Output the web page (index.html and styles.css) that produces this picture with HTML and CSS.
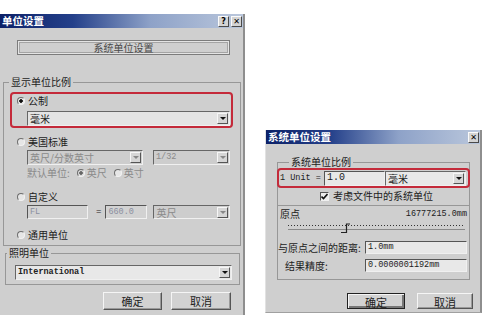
FILE: index.html
```html
<!DOCTYPE html>
<html lang="zh-CN">
<head>
<meta charset="UTF-8">
<title>单位设置</title>
<link rel="stylesheet" href="styles.css">
</head>
<body>

<div class="page">

  <div class="dialog dlg-units">
    <div class="titlebar">
      <span class="title">单位设置</span>
      <span class="tbtn">?</span>
      <span class="tbtn">✕</span>
    </div>

    <div class="sys-btn">系统单位设置</div>

    <fieldset class="group g-scale">
      <legend>显示单位比例</legend>
      <div class="hilite">
        <div class="opt"><span class="radio on"></span>公制</div>
        <div class="combo c-metric"><span class="val">毫米</span><span class="arrow"></span></div>
      </div>
      <div class="opt opt-us"><span class="radio"></span>美国标准</div>
      <div class="row row-us">
        <div class="combo off c-feet"><span class="val">英尺/分数英寸</span><span class="arrow"></span></div>
        <div class="combo off c-frac"><span class="val mono">1/32</span><span class="arrow"></span></div>
      </div>
      <div class="row row-default">
        <span class="dim">默认单位:</span>
        <span class="radio on small dimradio"></span><span class="dim">英尺</span>
        <span class="radio small"></span><span class="dim">英寸</span>
      </div>
      <div class="opt opt-custom"><span class="radio"></span>自定义</div>
      <div class="row row-custom">
        <div class="field off f-fl">FL</div>
        <span class="eq">=</span>
        <div class="field off f-num">660.0</div>
        <div class="combo off c-unit"><span class="val">英尺</span><span class="arrow"></span></div>
      </div>
      <div class="opt opt-generic"><span class="radio"></span>通用单位</div>
    </fieldset>

    <fieldset class="group g-light">
      <legend>照明单位</legend>
      <div class="combo c-intl"><span class="val mono">International</span><span class="arrow"></span></div>
    </fieldset>

    <div class="btn-row">
      <button class="btn b-ok">确定</button>
      <button class="btn b-cancel">取消</button>
    </div>
  </div>

  <div class="dialog dlg-system">
    <div class="titlebar">
      <span class="title">系统单位设置</span>
      <span class="tbtn">✕</span>
    </div>

    <fieldset class="group g-sys">
      <legend>系统单位比例</legend>
      <div class="hilite hilite-sys">
        <span class="mono unit-label">1 Unit =</span>
        <div class="field f-scale">1.0</div>
        <div class="combo c-mm"><span class="val">毫米</span><span class="arrow"></span></div>
      </div>
      <div class="check-row">
        <span class="checkbox">
          <svg width="7" height="7" viewBox="0 0 7 7"><polyline points="0.5,3.5 2.5,5.5 6.5,1" fill="none" stroke="#111" stroke-width="1.6"/></svg>
        </span>
        考虑文件中的系统单位
      </div>
    </fieldset>

    <div class="box-origin">
      <div class="origin-row">
        <span>原点</span>
        <span class="mono">16777215.0mm</span>
      </div>
      <div class="slider">
        <svg width="177" height="12" viewBox="0 0 177 12">
          <line x1="0" y1="2.5" x2="177" y2="2.5" stroke="#333" stroke-dasharray="1 2"/>
          <line x1="0" y1="6.5" x2="177" y2="6.5" stroke="#8a8a8a"/>
          <path d="M53 9.5 H58.5 V1 H62" fill="none" stroke="#222" stroke-width="1.2"/>
        </svg>
      </div>
      <div class="dist-row">
        <span class="lbl">与原点之间的距离:</span>
        <div class="field f-wide mono">1.0mm</div>
      </div>
      <div class="dist-row prec-row">
        <span class="lbl">结果精度:</span>
        <div class="field f-wide mono">0.0000001192mm</div>
      </div>
    </div>

    <div class="btn-row sys-btns">
      <button class="btn default b-ok2">确定</button>
      <button class="btn b-cancel2">取消</button>
    </div>
  </div>

</div>

</body>
</html>
```

FILE: styles.css
```css
* {
  box-sizing: border-box;
}
body {
  margin: 0;
  background: #fff;
  font-family: "Noto Sans CJK SC", "DejaVu Sans", sans-serif;
  font-size: 10px;
  color: #1c1c1c;
}
.page {
  display: flex;
  align-items: flex-start;
  width: 499px;
  height: 324px;
  overflow: hidden;
}
.mono {
  font-family: "Liberation Mono", "DejaVu Sans Mono", monospace;
  font-size: 8.5px;
}
.dim {
  color: #8a8a8a;
}

/* dialog frames */
.dialog {
  background: #cfcfcf;
}
.dlg-units {
  margin-top: 14px;
  width: 245px;
  height: 301px;
  border-right: 2px solid #8e8e8e;
}
.dlg-system {
  margin: 130px 0 0 20px;
  width: 217px;
  height: 183px;
  border-left: 1px solid #e2e2e2;
  border-right: 2px solid #8e8e8e;
  border-bottom: 1px solid #a0a0a0;
}
.titlebar {
  height: 14px;
  display: flex;
  align-items: center;
  gap: 2px;
  padding: 0 1px 0 2px;
  background: linear-gradient(90deg, #0c2168 0%, #24408a 30%, #8ea2c8 62%, #bac7dc 100%);
}
.title {
  flex: 1;
  color: #fff;
  font-weight: bold;
  font-size: 10.5px;
  line-height: 14px;
}
.tbtn {
  width: 11px;
  height: 11px;
  background: #d4d4d4;
  border: 1px solid;
  border-color: #fafafa #4a4a4a #4a4a4a #fafafa;
  font: bold 8px/9px "DejaVu Sans", sans-serif;
  text-align: center;
  color: #000;
}

/* left dialog */
.sys-btn {
  margin: 12px 0 0 17px;
  width: 213px;
  height: 15px;
  border: 1px solid #7c7c7c;
  box-shadow: inset 0 0 0 1px #e4e4e4, inset 0 0 0 2px #a4a4a4;
  text-align: center;
  line-height: 13px;
  color: #4a4a4a;
}
.group {
  margin: 0;
  padding: 0;
  min-width: 0;
  border: 1px solid #979797;
}
.group legend {
  padding: 0 2px;
  line-height: 14px;
}
.g-scale {
  margin: 20px 0 0 3px;
  width: 238px;
  height: 171px;
}
.g-scale legend {
  margin-left: 5px;
}
.hilite {
  margin: 3px 0 0 6px;
  width: 223px;
  height: 36px;
  padding-left: 5px;
  border: 2px solid #c42a3a;
  border-radius: 4px;
}
.opt {
  display: flex;
  align-items: center;
  height: 14px;
  line-height: 14px;
}
.radio {
  flex: none;
  width: 8px;
  height: 8px;
  margin-right: 3px;
  border: 1px solid;
  border-color: #6e6e6e #f2f2f2 #f2f2f2 #6e6e6e;
  border-radius: 50%;
  background: #e6e6e6;
}
.radio.on {
  background: radial-gradient(circle, #111 0 1.5px, #e6e6e6 2px);
}
.radio.dimradio {
  background: radial-gradient(circle, #666 0 1.5px, #d8d8d8 2px);
}
.radio.small {
  margin: 0 2px 0 7px;
}
.combo {
  display: flex;
  align-items: center;
  height: 15px;
  padding: 0 1px 0 2px;
  border: 1px solid;
  border-color: #666 #f0f0f0 #f0f0f0 #666;
  background: #e4e4e4;
}
.combo .val {
  flex: 1;
  line-height: 13px;
  white-space: nowrap;
}
.combo.off {
  background: #cdcdcd;
  color: #8a8a8a;
}
.arrow {
  flex: none;
  width: 11px;
  height: 11px;
  position: relative;
  background: #d6d6d6;
  border: 1px solid;
  border-color: #f6f6f6 #555 #555 #f6f6f6;
}
.arrow::after {
  content: "";
  position: absolute;
  left: 2px;
  top: 3px;
  border-left: 3px solid transparent;
  border-right: 3px solid transparent;
  border-top: 3px solid #111;
}
.combo.off .arrow::after {
  border-top-color: #888;
}
.c-metric {
  margin: 3px 0 0 10px;
  width: 203px;
}
.opt-us {
  margin: 7px 0 0 13px;
}
.row {
  display: flex;
  align-items: center;
  margin-left: 23px;
}
.row-us {
  margin-top: 1px;
  gap: 10px;
}
.c-feet {
  width: 116px;
}
.c-frac {
  width: 77px;
}
.row-default {
  margin-top: 1px;
  height: 14px;
  line-height: 14px;
}
.opt-custom {
  margin: 10px 0 0 13px;
}
.row-custom {
  margin-top: 1px;
  height: 14px;
}
.field {
  height: 14px;
  padding-left: 2px;
  border: 1px solid;
  border-color: #555 #f0f0f0 #f0f0f0 #555;
  background: #e6e6e6;
  font-family: "Liberation Mono", "DejaVu Sans Mono", monospace;
  font-size: 8.5px;
  line-height: 12px;
  white-space: nowrap;
}
.field.off {
  background: #d2d2d2;
  color: #8a8fa0;
}
.f-fl {
  width: 61px;
}
.eq {
  margin: 0 4px 0 8px;
  font-family: "Liberation Mono", monospace;
  font-size: 9px;
}
.f-num {
  width: 42px;
}
.c-unit {
  margin-left: 6px;
  width: 77px;
  height: 14px;
}
.opt-generic {
  margin: 9px 0 0 13px;
}
.g-light {
  margin: 0 0 0 5px;
  width: 235px;
  height: 39px;
}
.g-light legend {
  margin-left: 1px;
}
.c-intl {
  margin: 5px 0 0 9px;
  width: 217px;
  background: #e8e8e8;
}
.c-intl .val {
  font-weight: bold;
  color: #222;
}
.btn-row {
  display: flex;
  gap: 9px;
  margin: 7px 0 0 103px;
}
.btn {
  height: 18px;
  padding: 0;
  border: 1px solid;
  border-color: #f5f5f5 #555 #555 #f5f5f5;
  box-shadow: inset -1px -1px 0 #9a9a9a;
  background: #d2d2d2;
  font-family: "Noto Sans CJK SC", sans-serif;
  font-size: 11px;
  color: #222;
}
.b-ok {
  width: 59px;
}
.b-cancel {
  width: 60px;
}

/* right dialog */
.g-sys {
  margin: 12px 0 0 11px;
  width: 193px;
  height: 50px;
}
.g-sys legend {
  margin-left: 11px;
  line-height: 12px;
}
.hilite-sys {
  display: flex;
  align-items: center;
  margin: 0 -1px;
  width: auto;
  height: 20px;
  padding-left: 1px;
}
.unit-label {
  width: 44px;
  white-space: pre;
}
.f-scale {
  width: 61px;
  height: 15px;
  font-size: 10px;
  background: #e8e8e8;
}
.c-mm {
  width: 81px;
  background: #e8e8e8;
}
.check-row {
  display: flex;
  align-items: center;
  margin-top: 1px;
  padding-left: 42px;
  height: 14px;
  line-height: 14px;
}
.checkbox {
  display: flex;
  align-items: center;
  justify-content: center;
  width: 9px;
  height: 9px;
  margin-right: 4px;
  border: 1px solid;
  border-color: #555 #f0f0f0 #f0f0f0 #555;
  background: #ececec;
}
.box-origin {
  margin: -1px 0 0 11px;
  width: 193px;
  height: 75px;
  border: 1px solid #979797;
}
.origin-row {
  display: flex;
  justify-content: space-between;
  align-items: center;
  margin-top: 1px;
  padding: 0 2px;
  height: 14px;
  line-height: 14px;
}
.slider {
  margin: 2px 0 0 10px;
  height: 12px;
}
.slider svg {
  display: block;
}
.dist-row {
  display: flex;
  align-items: center;
  margin-top: 6px;
  height: 13px;
  line-height: 13px;
}
.dist-row .lbl {
  width: 87px;
  white-space: nowrap;
}
.prec-row {
  margin-top: 5px;
  padding-left: 7px;
}
.prec-row .lbl {
  width: 80px;
}
.f-wide {
  width: 102px;
  height: 13px;
  line-height: 11px;
  background: #e8e8e8;
}
.sys-btns {
  gap: 12px;
  margin: 13px 0 0 81px;
}
.sys-btns .btn {
  height: 16px;
}
.btn.default {
  border-color: #222;
  box-shadow: inset 1px 1px 0 #f5f5f5, inset -2px -2px 0 #777;
}
.b-ok2 {
  width: 58px;
}
.b-cancel2 {
  width: 56px;
}
```
